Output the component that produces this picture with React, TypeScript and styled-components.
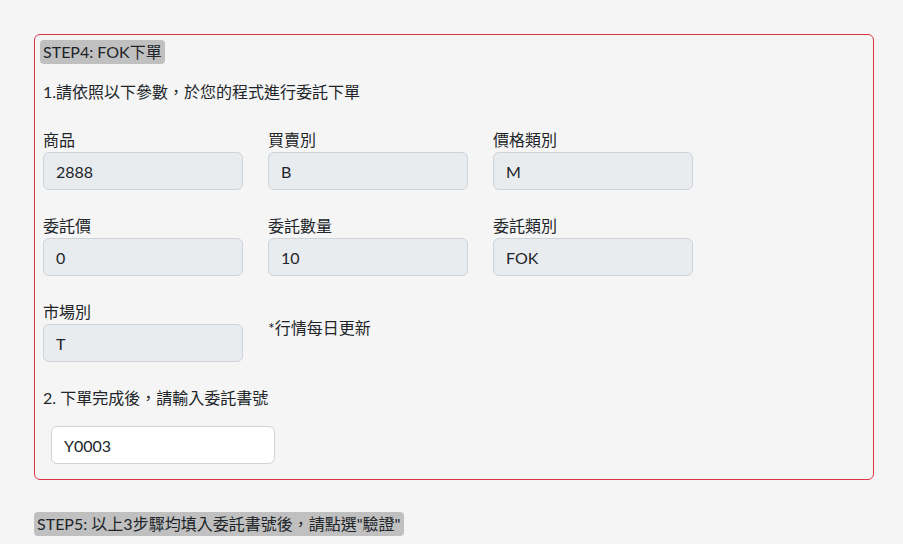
import styled, { createGlobalStyle } from "styled-components"

const GlobalStyle = createGlobalStyle`
	body {
		margin: 0;
		background: #f5f5f5;
		color: #212529;
		font-family: Lato, "Noto Sans CJK TC", sans-serif;
		font-size: 16px;
		line-height: 1.5;
	}
	* {
		box-sizing: border-box;
	}
`

const fields = [
	{ label: "商品", value: "2888" },
	{ label: "買賣別", value: "B" },
	{ label: "價格類別", value: "M" },
	{ label: "委託價", value: "0" },
	{ label: "委託數量", value: "10" },
	{ label: "委託類別", value: "FOK" },
	{ label: "市場別", value: "T" },
]

export default function App() {
	return (
		<>
			<GlobalStyle />
			<Page>
				<StepBox>
					<StepTag>STEP4: FOK下單</StepTag>
					<Text>1.請依照以下參數，於您的程式進行委託下單</Text>
					<ParamGrid>
						{fields.map((f) => (
							<Field key={f.label}>
								<Label>{f.label}</Label>
								<ReadOnlyInput readOnly value={f.value} />
							</Field>
						))}
						<Note>*行情每日更新</Note>
					</ParamGrid>
					<Text $gap={24}>2. 下單完成後，請輸入委託書號</Text>
					<OrderInput defaultValue="Y0003" />
				</StepBox>
				<StepTag $outside>STEP5: 以上3步驟均填入委託書號後，請點選"驗證"</StepTag>
			</Page>
		</>
	)
}

//style

const Page = styled.div`
	padding: 34px 30px 0 34px;
`

const StepBox = styled.div`
	width: 840px;
	border: 1px solid #dc3545;
	border-radius: 6px;
	padding: 5px 8px 15px 8px;
`

const StepTag = styled.div<{ $outside?: boolean }>`
	width: fit-content;
	background: #c0c0c0;
	border-radius: 4px;
	padding: 0 3px;
	margin-left: ${(p) => (p.$outside ? "0" : "-3px")};
	margin-top: ${(p) => (p.$outside ? "32px" : "0")};
	height: 24px;
	line-height: 24px;
	white-space: nowrap;
`

const Text = styled.p<{ $gap?: number }>`
	margin: ${(p) => p.$gap ?? 16}px 0 0 0;
	line-height: 24px;
`

const ParamGrid = styled.div`
	display: grid;
	grid-template-columns: repeat(3, 200px);
	column-gap: 25px;
	row-gap: 24px;
	margin-top: 24px;
`

const Field = styled.div`
	display: flex;
	flex-direction: column;
`

const Label = styled.label`
	line-height: 24px;
`

const ReadOnlyInput = styled.input`
	width: 200px;
	height: 38px;
	padding: 6px 12px;
	font: inherit;
	color: #212529;
	background: #e9ecef;
	border: 1px solid #ced4da;
	border-radius: 6px;
	outline: none;
`

const Note = styled.div`
	padding-top: 16px;
	line-height: 24px;
`

const OrderInput = styled.input`
	display: block;
	width: 224px;
	height: 38px;
	margin: 16px 0 0 8px;
	padding: 6px 12px;
	font: inherit;
	color: #212529;
	background: #fff;
	border: 1px solid #ced4da;
	border-radius: 6px;
	outline: none;
`
